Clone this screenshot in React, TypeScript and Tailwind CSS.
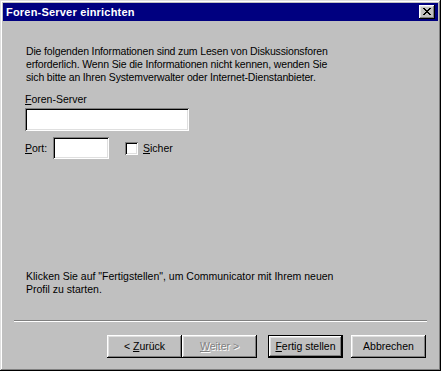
import React from 'react';

const font = { fontFamily: '"Liberation Sans", Arial, sans-serif' };

function U({ children }: { children: React.ReactNode }) {
  return <span className="underline underline-offset-[1px]">{children}</span>;
}

function Sunken({ className }: { className: string }) {
  return (
    <div
      className={`bg-white shadow-[inset_1px_1px_#808080,inset_-1px_-1px_#fff,inset_2px_2px_#000,inset_-2px_-2px_#dfdfdf] ${className}`}
    />
  );
}

function Btn({
  children,
  def = false,
  disabled = false,
}: {
  children: React.ReactNode;
  def?: boolean;
  disabled?: boolean;
}) {
  const bevel =
    'shadow-[inset_-1px_-1px_#000,inset_1px_1px_#fff,inset_-2px_-2px_#808080,inset_2px_2px_#dfdfdf]';
  const inner = (
    <div
      className={`flex h-full w-full items-center justify-center bg-[#c0c0c0] ${bevel} ${
        disabled ? 'text-[#808080] [text-shadow:1px_1px_#fff]' : 'text-black'
      }`}
    >
      <span className="whitespace-pre">{children}</span>
    </div>
  );
  if (def) {
    return <div className="h-[23px] w-[75px] border border-black">{inner}</div>;
  }
  return <div className="h-[23px] w-[75px]">{inner}</div>;
}

export default function App() {
  return (
    <div
      className="relative flex h-[371px] w-[441px] flex-col bg-[#c0c0c0] p-[3px] text-[10.5px] leading-[13px] text-black shadow-[inset_-1px_-1px_#000,inset_1px_1px_#dfdfdf,inset_-2px_-2px_#808080,inset_2px_2px_#fff]"
      style={font}
    >
      {/* title bar */}
      <div className="flex h-[18px] items-center justify-between bg-[#000080] pl-[3px] pr-[3px]">
        <span className="text-[11px] font-bold tracking-[0.2px] text-white">Foren-Server einrichten</span>
        <div className="flex h-[14px] w-[16px] items-center justify-center bg-[#c0c0c0] shadow-[inset_-1px_-1px_#000,inset_1px_1px_#fff,inset_-2px_-2px_#808080,inset_2px_2px_#dfdfdf]">
          <svg width="8" height="7" viewBox="0 0 8 7" shapeRendering="crispEdges" className="mb-[1px]">
            <path
              d="M0 0h2v1H0zM6 0h2v1H6zM1 1h2v1H1zM5 1h2v1H5zM2 2h4v1H2zM3 3h2v1H3zM2 4h4v1H2zM1 5h2v1H1zM5 5h2v1H5zM0 6h2v1H0zM6 6h2v1H6z"
              fill="#000"
            />
          </svg>
        </div>
      </div>

      {/* body */}
      <div className="flex flex-1 flex-col">
        <div className="mt-[24px] pl-[23px] whitespace-nowrap tracking-[-0.15px]">
          Die folgenden Informationen sind zum Lesen von Diskussionsforen
          <br />
          erforderlich. Wenn Sie die Informationen nicht kennen, wenden Sie
          <br />
          sich bitte an Ihren Systemverwalter oder Internet-Dienstanbieter.
        </div>

        <div className="mt-[9px] pl-[22px]">
          <U>F</U>oren-Server
        </div>
        <div className="mt-[2px] pl-[22px]">
          <Sunken className="h-[23px] w-[164px]" />
        </div>

        <div className="mt-[6px] flex items-center pl-[22px]">
          <span className="w-[28px]">
            <U>P</U>ort:
          </span>
          <Sunken className="h-[22px] w-[56px]" />
          <div className="ml-[16px] flex items-center">
            <Sunken className="h-[13px] w-[13px]" />
            <span className="ml-[5px]">
              <U>S</U>icher
            </span>
          </div>
        </div>

        <div className="flex-1" />

        <div className="pl-[23px] whitespace-nowrap">
          Klicken Sie auf &quot;Fertigstellen&quot;, um Communicator mit Ihrem neuen
          <br />
          Profil zu starten.
        </div>

        <div className="mx-[11px] mt-[24px] h-[2px] border-t border-b border-t-[#808080] border-b-white" />

        <div className="mt-[13px] mb-[10px] flex items-center justify-end pr-[12px]">
          <Btn>
            &lt; <U>Z</U>urück
          </Btn>
          <Btn disabled>
            <U>W</U>eiter &gt;
          </Btn>
          <div className="ml-[11px]">
            <Btn def>
              <U>F</U>ertig stellen
            </Btn>
          </div>
          <div className="ml-[8px]">
            <Btn>Abbrechen</Btn>
          </div>
        </div>
      </div>
    </div>
  );
}
